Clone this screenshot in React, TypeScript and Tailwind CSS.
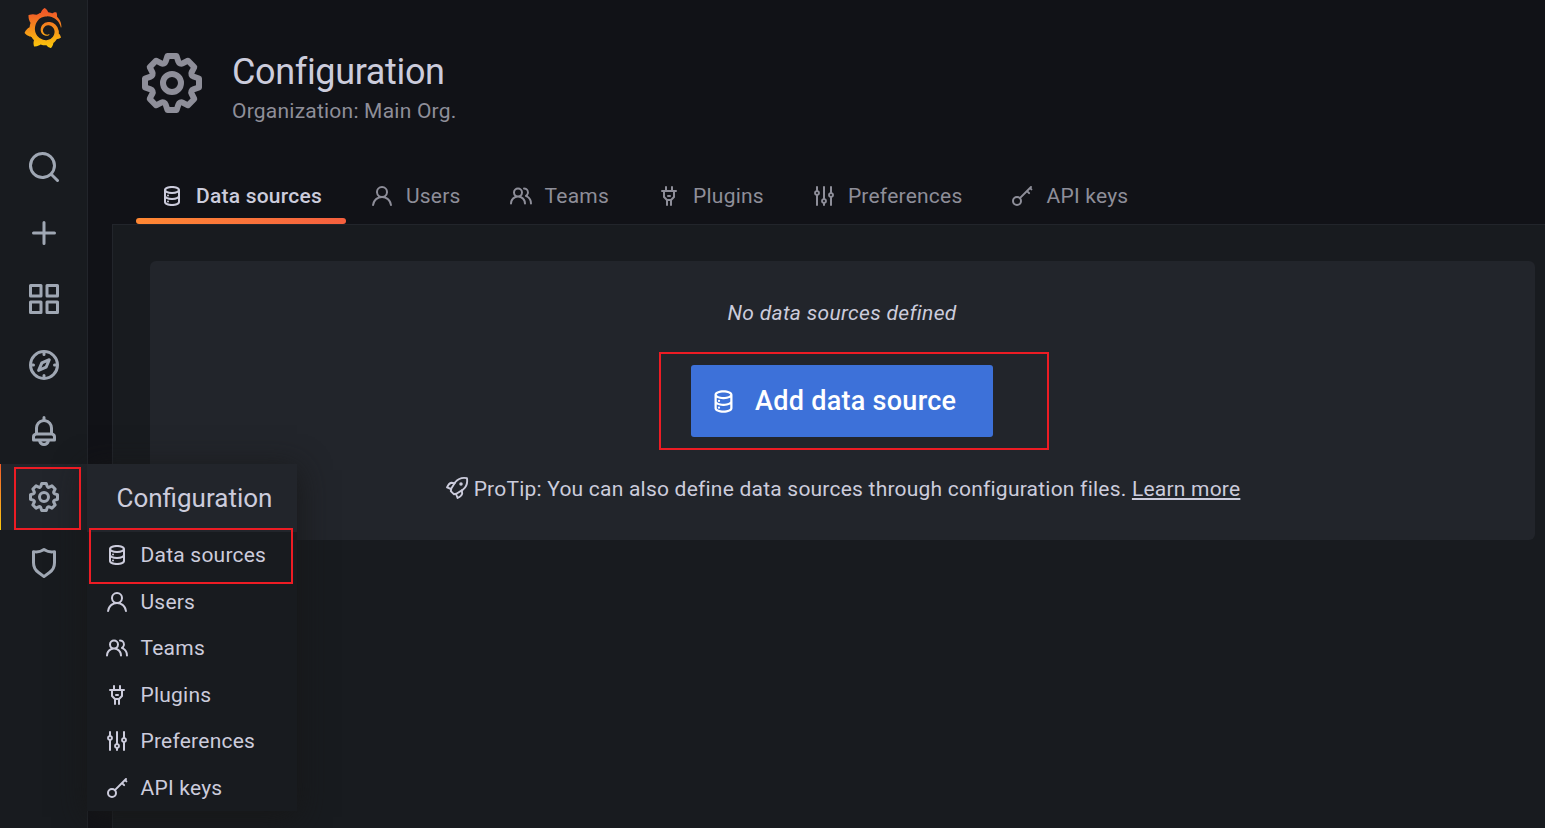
import type { ReactNode } from "react";
import { SiGrafana } from "react-icons/si";

const PATHS = {
  search:
    "M21.71,20.29,18,16.61A9,9,0,1,0,16.61,18l3.68,3.68a1,1,0,0,0,1.42,0A1,1,0,0,0,21.71,20.29ZM11,18a7,7,0,1,1,7-7A7,7,0,0,1,11,18Z",
  plus: "M19,11H13V5a1,1,0,0,0-2,0v6H5a1,1,0,0,0,0,2h6v6a1,1,0,0,0,2,0V13h6a1,1,0,0,0,0-2Z",
  apps: "M10,13H3a1,1,0,0,0-1,1v7a1,1,0,0,0,1,1h7a1,1,0,0,0,1-1V14A1,1,0,0,0,10,13ZM9,20H4V15H9ZM21,2H14a1,1,0,0,0-1,1v7a1,1,0,0,0,1,1h7a1,1,0,0,0,1-1V3A1,1,0,0,0,21,2ZM20,9H15V4h5Zm1,4H14a1,1,0,0,0-1,1v7a1,1,0,0,0,1,1h7a1,1,0,0,0,1-1V14A1,1,0,0,0,21,13Zm-1,7H15V15h5ZM10,2H3A1,1,0,0,0,2,3v7a1,1,0,0,0,1,1h7a1,1,0,0,0,1-1V3A1,1,0,0,0,10,2ZM9,9H4V4H9Z",
  compass:
    "M12,2A10,10,0,1,0,22,12,10,10,0,0,0,12,2Zm1,17.93V19a1,1,0,0,0-2,0v.93A8,8,0,0,1,4.07,13H5a1,1,0,0,0,0-2H4.07A8,8,0,0,1,11,4.07V5a1,1,0,0,0,2,0V4.07A8,8,0,0,1,19.93,11H19a1,1,0,0,0,0,2h.93A8,8,0,0,1,13,19.93ZM15.14,7.55l-5,2.12a1,1,0,0,0-.52.52l-2.12,5a1,1,0,0,0,.21,1.1,1,1,0,0,0,.7.3.93.93,0,0,0,.4-.09l5-2.12a1,1,0,0,0,.52-.52l2.12-5a1,1,0,0,0-1.31-1.31Zm-2.49,5.1-2.28,1,1-2.28,2.28-1Z",
  bell: "M18,13.18V10a6,6,0,0,0-5-5.91V3a1,1,0,0,0-2,0V4.09A6,6,0,0,0,6,10v3.18A3,3,0,0,0,4,16v2a1,1,0,0,0,1,1H8.14a4,4,0,0,0,7.72,0H19a1,1,0,0,0,1-1V16A3,3,0,0,0,18,13.18ZM8,10a4,4,0,0,1,8,0v3H8Zm4,10a2,2,0,0,1-1.72-1h3.44A2,2,0,0,1,12,20Zm6-3H6V16a1,1,0,0,1,1-1H17a1,1,0,0,1,1,1Z",
  cog: "M21.32,9.55l-1.89-.63.89-1.78A1,1,0,0,0,20.13,6L18,3.87a1,1,0,0,0-1.15-.19l-1.78.89-.63-1.89A1,1,0,0,0,13.5,2h-3a1,1,0,0,0-.95.68L8.92,4.57,7.14,3.68A1,1,0,0,0,6,3.87L3.87,6a1,1,0,0,0-.19,1.15l.89,1.78-1.89.63A1,1,0,0,0,2,10.5v3a1,1,0,0,0,.68.95l1.89.63-.89,1.78A1,1,0,0,0,3.87,18L6,20.13a1,1,0,0,0,1.15.19l1.78-.89.63,1.89a1,1,0,0,0,.95.68h3a1,1,0,0,0,.95-.68l.63-1.89,1.78.89A1,1,0,0,0,18,20.13L20.13,18a1,1,0,0,0,.19-1.15l-.89-1.78,1.89-.63A1,1,0,0,0,22,13.5v-3A1,1,0,0,0,21.32,9.55ZM20,12.78l-1.2.4A2,2,0,0,0,17.64,16l.57,1.14-1.1,1.1L16,17.64a2,2,0,0,0-2.79,1.16l-.4,1.2H11.22l-.4-1.2A2,2,0,0,0,8,17.64l-1.14.57-1.1-1.1L6.36,16A2,2,0,0,0,5.2,13.18L4,12.78V11.22l1.2-.4A2,2,0,0,0,6.36,8L5.79,6.89l1.1-1.1L8,6.36A2,2,0,0,0,10.82,5.2l.4-1.2h1.56l.4,1.2A2,2,0,0,0,16,6.36l1.14-.57,1.1,1.1L17.64,8a2,2,0,0,0,1.16,2.79l1.2.4ZM12,8a4,4,0,1,0,4,4A4,4,0,0,0,12,8Zm0,6a2,2,0,1,1,2-2A2,2,0,0,1,12,14Z",
  shield:
    "M19.63,3.65a1,1,0,0,0-.84-.2,8,8,0,0,1-6.22-1.27,1,1,0,0,0-1.14,0A8,8,0,0,1,5.21,3.45a1,1,0,0,0-.84.2A1,1,0,0,0,4,4.43v7.45a9,9,0,0,0,3.77,7.33l3.65,2.6a1,1,0,0,0,1.16,0l3.65-2.6A9,9,0,0,0,20,11.88V4.43A1,1,0,0,0,19.63,3.65ZM18,11.88a7,7,0,0,1-2.93,5.7L12,19.77,8.93,17.58A7,7,0,0,1,6,11.88V5.58a10,10,0,0,0,6-1.39,10,10,0,0,0,6,1.39Z",
  database:
    "M8,16.5a1,1,0,1,0,1,1A1,1,0,0,0,8,16.5ZM12,2C8,2,4,3.37,4,6V18c0,2.63,4,4,8,4s8-1.37,8-4V6C20,3.37,16,2,12,2Zm6,16c0,.71-2.28,2-6,2s-6-1.29-6-2V14.73A13.16,13.16,0,0,0,12,16a13.16,13.16,0,0,0,6-1.27Zm0-6c0,.71-2.28,2-6,2s-6-1.29-6-2V8.73A13.16,13.16,0,0,0,12,10a13.16,13.16,0,0,0,6-1.27ZM12,8C8.28,8,6,6.71,6,6s2.28-2,6-2,6,1.29,6,2S15.72,8,12,8ZM8,10.5a1,1,0,1,0,1,1A1,1,0,0,0,8,10.5Z",
  user: "M15.71,12.71a6,6,0,1,0-7.42,0,10,10,0,0,0-6.22,8.18,1,1,0,0,0,2,.22,8,8,0,0,1,15.9,0,1,1,0,0,0,1,.89h.11a1,1,0,0,0,.88-1.1A10,10,0,0,0,15.71,12.71ZM12,12a4,4,0,1,1,4-4A4,4,0,0,1,12,12Z",
  users:
    "M12.3,12.22A4.92,4.92,0,0,0,14,8.5a5,5,0,0,0-10,0,4.92,4.92,0,0,0,1.7,3.72A8,8,0,0,0,1,19.5a1,1,0,0,0,2,0,6,6,0,0,1,12,0,1,1,0,0,0,2,0A8,8,0,0,0,12.3,12.22ZM9,11.5a3,3,0,1,1,3-3A3,3,0,0,1,9,11.5Zm9.74.32A5,5,0,0,0,15,3.5a1,1,0,0,0,0,2,3,3,0,0,1,3,3,3,3,0,0,1-1.5,2.59,1,1,0,0,0-.5.84,1,1,0,0,0,.45.86l.39.26.13.07a7,7,0,0,1,4,6.38,1,1,0,0,0,2,0A9,9,0,0,0,18.74,11.82Z",
  plug: "M19,6H16V3a1,1,0,0,0-2,0V6H10V3A1,1,0,0,0,8,3V6H5A1,1,0,0,0,5,8H6v5a1,1,0,0,0,.29.71L9,16.41V21a1,1,0,0,0,2,0V17h2v4a1,1,0,0,0,2,0V16.41l2.71-2.7A1,1,0,0,0,18,13V8h1a1,1,0,0,0,0-2Zm-3,6.59L13.59,15H10.41L8,12.59V8h8ZM11,13h2a1,1,0,0,0,0-2H11a1,1,0,0,0,0,2Z",
  sliders:
    "M20,8.18V3a1,1,0,0,0-2,0V8.18a3,3,0,0,0,0,5.64V21a1,1,0,0,0,2,0V13.82a3,3,0,0,0,0-5.64ZM19,12a1,1,0,1,1,1-1A1,1,0,0,1,19,12Zm-6,2.18V3a1,1,0,0,0-2,0V14.18a3,3,0,0,0,0,5.64V21a1,1,0,0,0,2,0V19.82a3,3,0,0,0,0-5.64ZM12,18a1,1,0,1,1,1-1A1,1,0,0,1,12,18ZM6,6.18V3A1,1,0,0,0,4,3V6.18a3,3,0,0,0,0,5.64V21a1,1,0,0,0,2,0V11.82A3,3,0,0,0,6,6.18ZM5,10A1,1,0,1,1,6,9,1,1,0,0,1,5,10Z",
};

type IconName = keyof typeof PATHS | "key" | "rocket";

function Icon({ name, className = "size-6" }: { name: IconName; className?: string }) {
  let body: ReactNode;
  if (name === "key") {
    body = (
      <g fill="none" stroke="currentColor" strokeWidth="2" strokeLinecap="round" strokeLinejoin="round">
        <circle cx="7" cy="17" r="4" />
        <path d="M9.9 14.1 21 3M17 7l2.1 2.1M20 4l1.4 1.4" />
      </g>
    );
  } else if (name === "rocket") {
    body = (
      <g fill="none" stroke="currentColor" strokeWidth="1.9" strokeLinecap="round" strokeLinejoin="round">
        <path d="M21.9 2.1C17 1.2 13 2.8 10.4 6L6.3 12.6 5.8 15.2 8.8 18.2 11.4 17.7 18 13.6C21.2 11 22.8 7 21.9 2.1Z" />
        <path d="M9.6 7.2 6.4 6.8C4.6 7.2 3.2 8.8 2 11.4L6 13" />
        <path d="M16.8 14.4 17.2 17.6C16.8 19.4 15.2 20.8 12.6 22L11 18" />
        <circle cx="16" cy="8" r="0.8" fill="currentColor" />
      </g>
    );
  } else {
    body = <path d={PATHS[name]} />;
  }
  return (
    <svg viewBox="0 0 24 24" fill="currentColor" aria-hidden="true" className={`shrink-0 ${className}`}>
      {body}
    </svg>
  );
}

const sections: { icon: IconName; label: string }[] = [
  { icon: "database", label: "Data sources" },
  { icon: "user", label: "Users" },
  { icon: "users", label: "Teams" },
  { icon: "plug", label: "Plugins" },
  { icon: "sliders", label: "Preferences" },
  { icon: "key", label: "API keys" },
];

const navIcons: IconName[] = ["search", "plus", "apps", "compass", "bell", "cog", "shield"];

function ConfigMenu() {
  return (
    <div className="absolute top-0 left-[87px] z-20 h-[347px] w-[210px] bg-[#181b1f] text-[#ccccdc] shadow-[0_6px_30px_rgba(23,23,23,0.95)]">
      <div className="flex h-[68px] items-center bg-[#22252b] pl-[29.5px] text-[26px] tracking-normal">
        Configuration
      </div>
      <ul>
        {sections.map((s) => (
          <li key={s.label} className="flex h-[46.5px] items-center gap-[11.5px] pl-[18px]">
            <Icon name={s.icon} />
            <span className="pt-px">{s.label}</span>
          </li>
        ))}
      </ul>
      <div className="absolute top-[64px] left-[2px] h-14 w-[204px] border-2 border-[#ed1c24]" />
    </div>
  );
}

function Sidebar() {
  return (
    <nav className="relative z-10 flex w-[88px] shrink-0 flex-col border-r border-[#22252b] bg-[#181b1f] text-[#9fa7b3]">
      <div className="flex h-[134px] justify-center pt-2 pr-px">
        <svg width="0" height="0" className="absolute">
          <linearGradient id="brand" x1="0" y1="0" x2="0" y2="1">
            <stop offset="0.1" stopColor="#f05a28" />
            <stop offset="1" stopColor="#fbca0a" />
          </linearGradient>
        </svg>
        <SiGrafana size={40} fill="url(#brand)" />
      </div>
      {navIcons.map((name) =>
        name === "cog" ? (
          <div key={name} className="relative flex h-[66px] items-center justify-center bg-[#22252b]">
            <div className="absolute inset-y-0 left-0 w-px bg-linear-to-b from-[#f05a28] to-[#fbca0a]" />
            <ConfigMenu />
            <Icon name={name} className="relative z-30 size-9" />
            <div className="absolute top-[3px] left-[14px] z-30 h-[63px] w-[67px] border-2 border-[#ed1c24]" />
          </div>
        ) : (
          <div key={name} className="flex h-[66px] items-center justify-center">
            <Icon name={name} className="relative z-30 size-9" />
          </div>
        ),
      )}
    </nav>
  );
}

function Tabs() {
  return (
    <div className="flex h-14 pl-6 text-[#8e8e99]">
      {sections.map((s, i) =>
        i === 0 ? (
          <div key={s.label} className="relative flex items-center gap-3 px-6 font-medium text-[#ccccdc]">
            <Icon name={s.icon} />
            {s.label}
            <div className="absolute inset-x-0 bottom-0 h-1.5 rounded-[3px] bg-linear-to-r from-[#ff8833] to-[#f55f3e]" />
          </div>
        ) : (
          <div key={s.label} className="flex items-center gap-3 px-6">
            <Icon name={s.icon} />
            {s.label}
          </div>
        ),
      )}
    </div>
  );
}

export default function App() {
  return (
    <div className="flex h-[828px] w-[1545px] overflow-hidden bg-[#111217] font-[Roboto,sans-serif] text-[21px] leading-[33px] tracking-[0.225px] whitespace-nowrap">
      <Sidebar />
      <main className="flex min-w-0 flex-1 flex-col pl-6">
        <header className="flex h-[168px] gap-6 pt-[47px] pl-6">
          <Icon name="cog" className="size-18 text-[#8e8e99]" />
          <div>
            <h1 className="pt-[3px] text-[36px] leading-[45px] tracking-[-0.35px] text-[#ccccdc]">Configuration</h1>
            <p className="text-[#8e8e99]">Organization: Main Org.</p>
          </div>
        </header>
        <Tabs />
        <section className="flex-1 border-t border-l border-[#22252b] bg-[#181b1f] pt-9 pr-2.5 pl-[37px] text-[#ccccdc]">
          <div className="flex h-[279px] flex-col items-center rounded-md bg-[#22252b] pt-9">
            <p className="pr-px tracking-[0.32px] italic">No data sources defined</p>
            <div className="relative mt-[35px] mr-px h-[72px]">
              <button className="flex h-[72px] w-[302px] items-center gap-[18px] rounded-[3px] bg-[#3d71d9] pl-[19px] text-[27px] font-medium tracking-[0.28px] text-white">
                <Icon name="database" className="size-[27px]" />
                Add data source
              </button>
              <div className="absolute -top-[13px] -left-8 h-[98px] w-[390px] border-2 border-[#ed1c24]" />
            </div>
            <p className="mt-9 flex items-center gap-[5px] tracking-[0.22px]">
              <Icon name="rocket" className="mb-[3px] size-6" />
              <span>
                ProTip: You can also define data sources through configuration files.{" "}
                <a className="underline">Learn more</a>
              </span>
            </p>
          </div>
        </section>
      </main>
    </div>
  );
}
